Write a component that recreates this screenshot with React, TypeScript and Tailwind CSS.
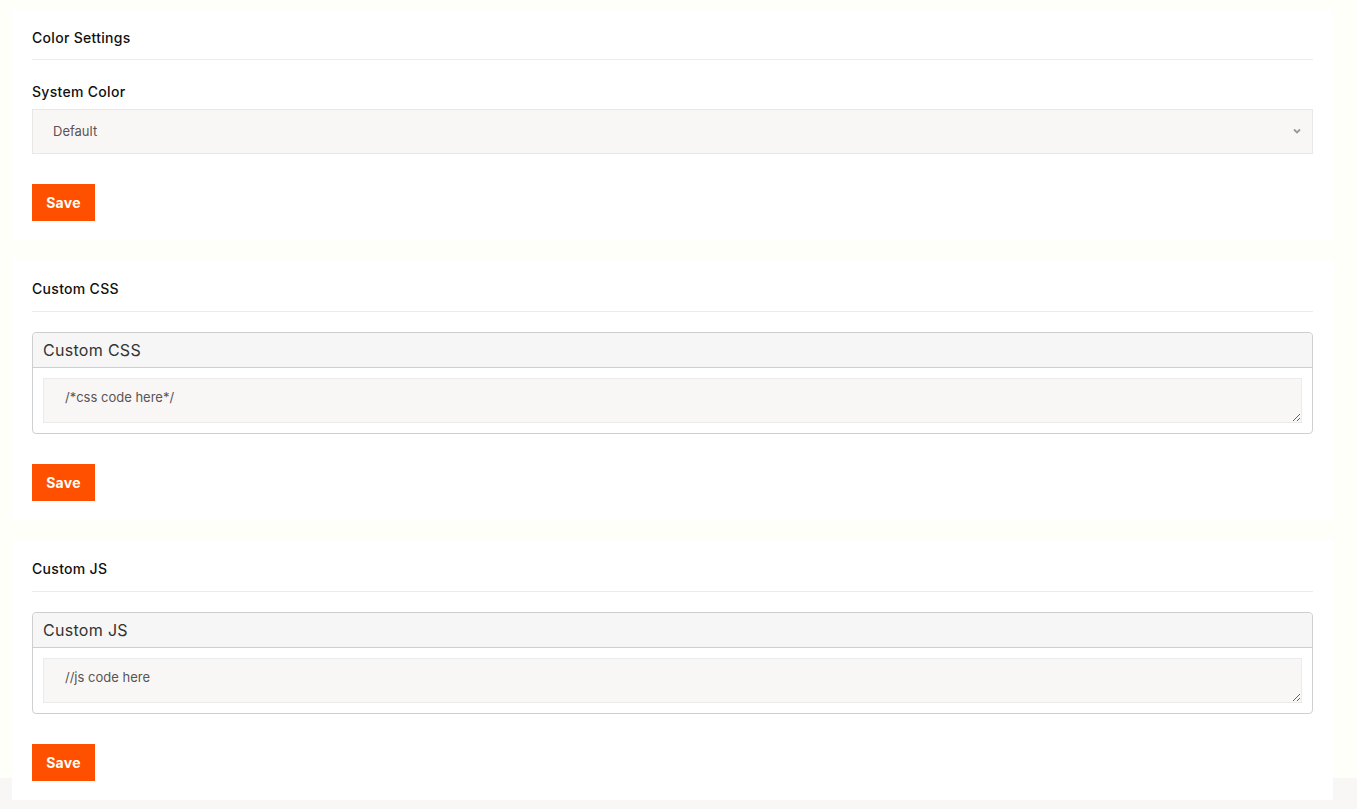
import React from "react";

const font = { fontFamily: "Inter, 'Open Sans', sans-serif" };

function SaveButton() {
  return (
    <button className="h-[37px] w-[63px] bg-[#ff5000] text-[14px] font-bold tracking-[0.3px] text-white">
      Save
    </button>
  );
}

function CardTitle({ title, pad }: { title: string; pad: string }) {
  return (
    <div className={`${pad} border-b border-[#ececec]`}>
      <h2 className="text-[14px] leading-5 font-medium tracking-[0.3px] text-[#111]">{title}</h2>
    </div>
  );
}

function CodePanel({ title, code }: { title: string; code: string }) {
  return (
    <div className="mt-[20px] rounded-[4px] border border-[#cfcfcf]">
      <div className="h-[35px] rounded-t-[4px] border-b border-[#cfcfcf] bg-[#f6f6f6] px-[10px] text-[16px] leading-[34px] tracking-[0.3px] text-[#333]">
        {title}
      </div>
      <div className="p-[10px]">
        <textarea
          defaultValue={code}
          className="block h-[45px] w-full border border-[#ebebeb] bg-[#f8f7f6] px-[21px] pt-[8px] text-[13px] leading-5 text-[#5b5355] outline-none"
        />
      </div>
    </div>
  );
}

export default function App() {
  return (
    <div className="min-h-[809px] bg-[#f8f7f5]" style={font}>
      <div className="flex h-[778px] flex-col gap-5 bg-[#fffffa] pt-[10px] pl-3 pr-6">
        {/* Color settings */}
        <section className="bg-white px-5 pb-[19px]">
          <CardTitle title="Color Settings" pad="pt-[18px] pb-[11px]" />
          <label className="mt-[22px] block text-[14px] leading-5 font-medium tracking-[0.3px] text-[#111]">
            System Color
          </label>
          <div className="relative mt-[7px]">
            <select className="block h-[45px] w-full appearance-none border border-[#e8e8e8] bg-[#f8f7f6] px-5 text-[13px] text-[#5b5355] outline-none">
              <option>Default</option>
            </select>
            <svg
              className="pointer-events-none absolute right-[12px] top-[19px]"
              width="8"
              height="6"
              viewBox="0 0 8 6"
            >
              <path d="M1 1.5 L4 4.5 L7 1.5" fill="none" stroke="#999" strokeWidth="1.8" />
            </svg>
          </div>
          <div className="mt-[30px]">
            <SaveButton />
          </div>
        </section>

        {/* Custom CSS */}
        <section className="bg-white px-5 pb-[19px]">
          <CardTitle title="Custom CSS" pad="pt-[19px] pb-[12px]" />
          <CodePanel title="Custom CSS" code="/*css code here*/" />
          <div className="mt-[30px]">
            <SaveButton />
          </div>
        </section>

        {/* Custom JS */}
        <section className="bg-white px-5 pb-[19px]">
          <CardTitle title="Custom JS" pad="pt-[19px] pb-[12px]" />
          <CodePanel title="Custom JS" code="//js code here" />
          <div className="mt-[30px]">
            <SaveButton />
          </div>
        </section>
      </div>
    </div>
  );
}
